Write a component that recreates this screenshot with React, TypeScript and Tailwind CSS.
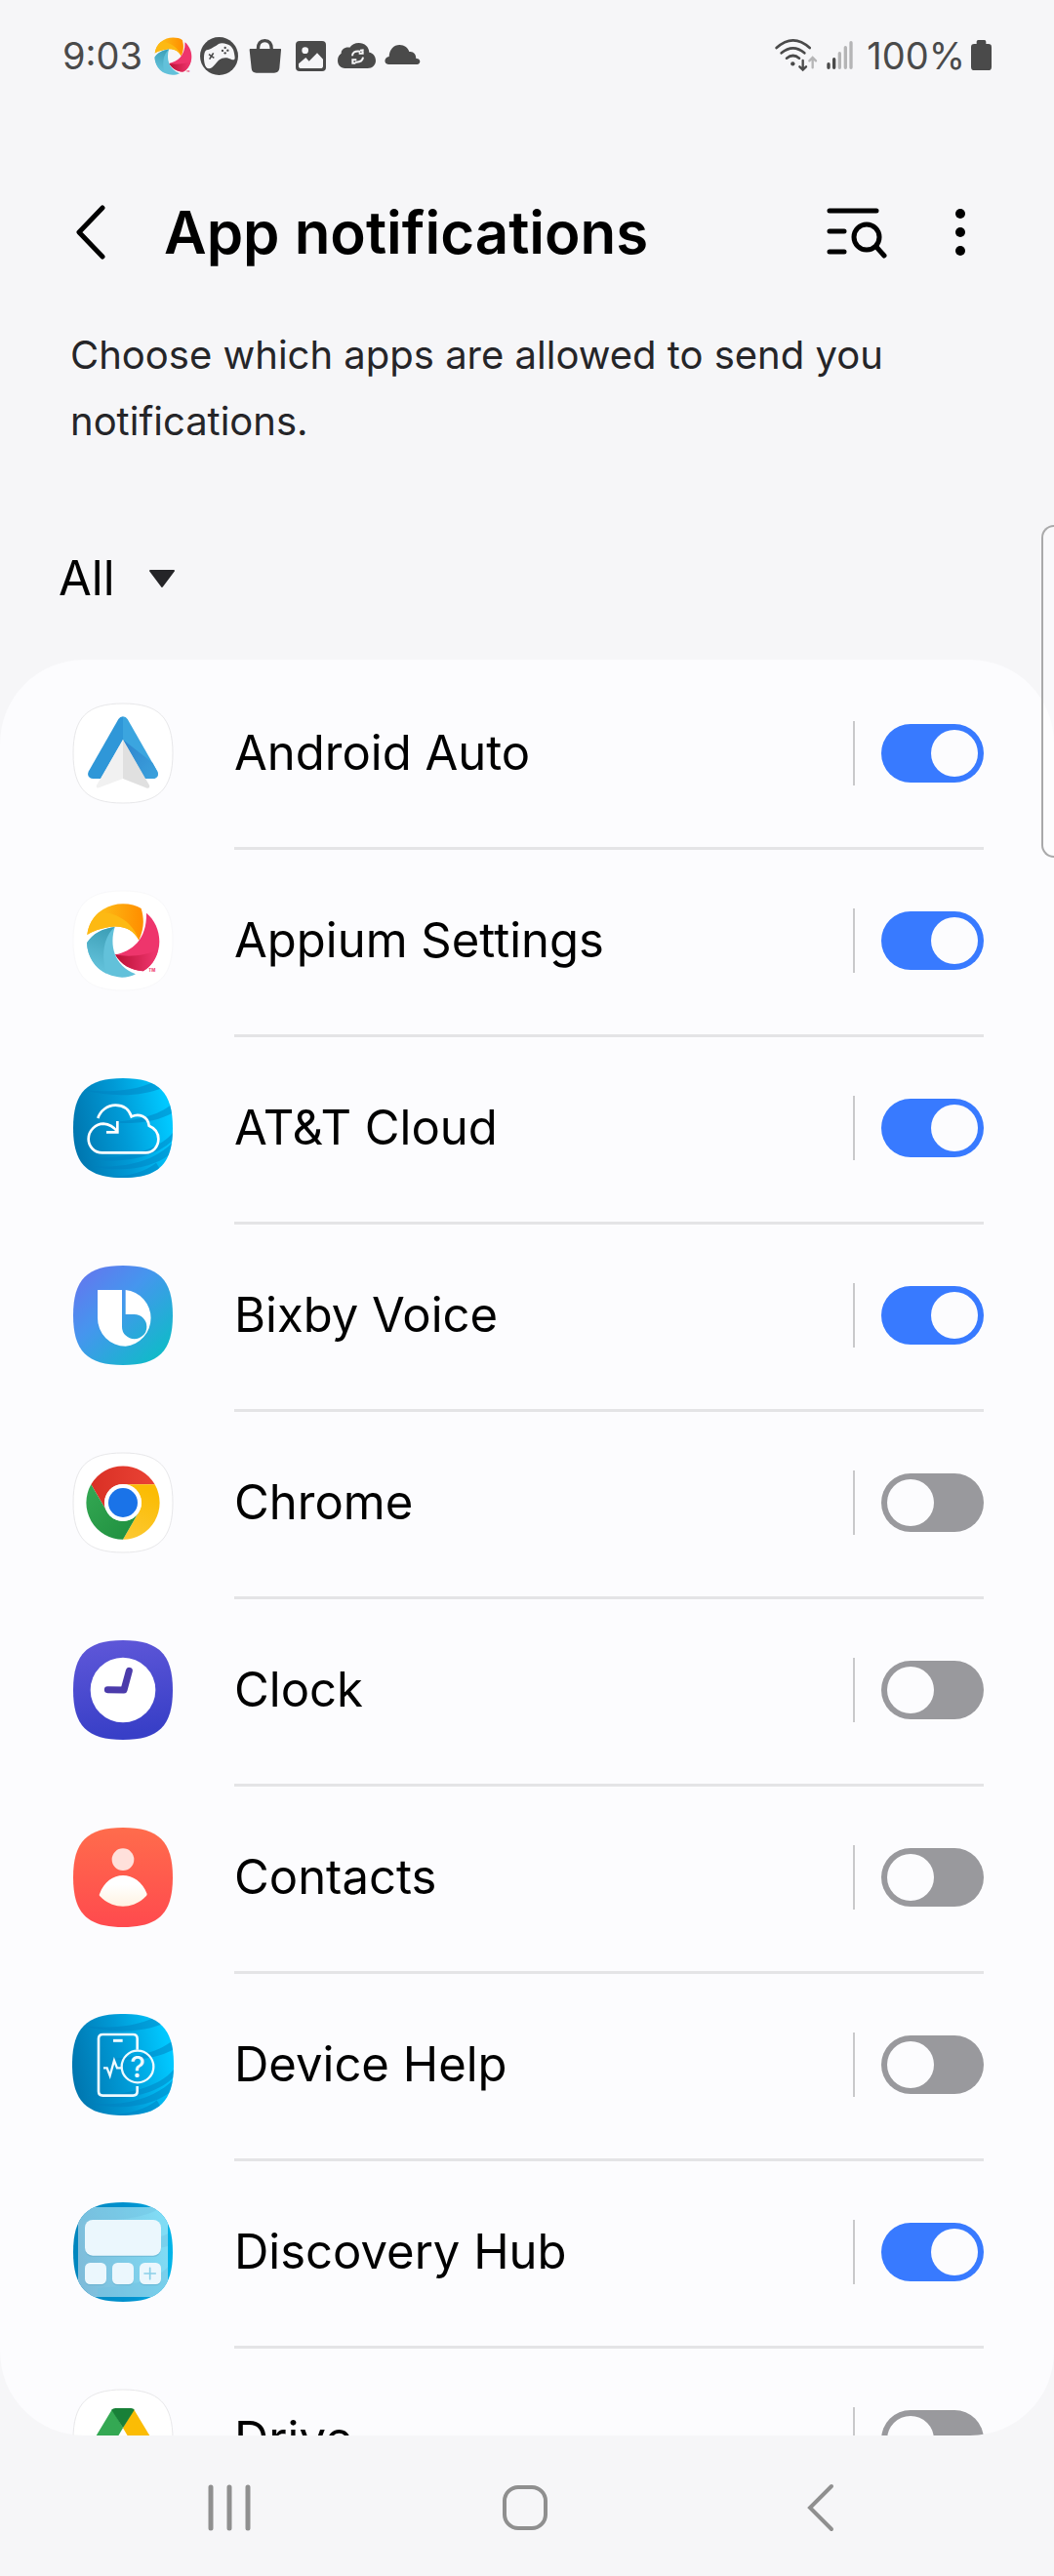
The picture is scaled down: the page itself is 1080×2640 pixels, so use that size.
import { useState, type ReactNode } from "react";

type App = { name: string; icon: ReactNode; on: boolean };

/* ---------- App icons ---------- */

const SQUIRCLE =
  "M0 -153 C110 -153 153 -110 153 0 C153 110 110 153 0 153 C-110 153 -153 110 -153 0 C-153 -110 -110 -153 0 -153Z";

function Tile({ x = 72, y, fill = "#ffffff", stroke = "none", children }: {
  x?: number; y: number; fill?: string; stroke?: string; children: ReactNode;
}) {
  return (
    <svg viewBox={`${x} ${y} 312 312`} className="size-[104px] shrink-0" aria-hidden="true">
      <path d={SQUIRCLE} transform={`translate(${x + 156} ${y + 156})`} fill={fill} stroke={stroke} strokeWidth="3" />
      {children}
    </svg>
  );
}

function AndroidAutoIcon() {
  return (
    <Tile y={90} stroke="#e8e8ea">
      <defs>
        <linearGradient id="aa-shade" x1="0" y1="0" x2="1" y2="1">
          <stop offset="0" stopColor="#2f84cd" />
          <stop offset="1" stopColor="#3ba2dd" />
        </linearGradient>
      </defs>
      <path d="M228 133 Q219 133 214 141 L122 302 Q117 314 126 321 Q130 324 136 324 H160 L228 204Z" fill="#2f97d8" />
      <path d="M228 133 Q237 133 242 141 L334 302 Q339 314 330 321 Q326 324 320 324 H296 L228 204Z" fill="#3ba5df" />
      <path d="M228 204 L319 275 L334 302 Q339 314 330 321 Q326 324 320 324 H296Z" fill="url(#aa-shade)" />
      <path d="M228 204 L147 344 Q144 354 154 352 L228 324Z" fill="#f1f1f1" />
      <path d="M228 204 L309 344 Q312 354 302 353 L228 324Z" fill="#e0e0e0" />
    </Tile>
  );
}

function AppiumMark() {
  return (
    <>
      <defs>
        <linearGradient id="ap-y" x1="0" y1="0" x2="1" y2="0">
          <stop offset="0.3" stopColor="#fdb714" />
          <stop offset="0.95" stopColor="#ff9000" />
        </linearGradient>
        <linearGradient id="ap-p" x1="0" y1="0" x2="1" y2="0">
          <stop offset="0" stopColor="#ba1035" />
          <stop offset="0.9" stopColor="#ec346b" />
        </linearGradient>
        <linearGradient id="ap-t" x1="0.6" y1="0" x2="0.4" y2="1">
          <stop offset="0" stopColor="#3d9fb7" />
          <stop offset="0.9" stopColor="#62c1da" />
        </linearGradient>
      </defs>
      <path d="M118 804 C124 745 175 709 228 709 C250 709 270 714 284 723 C294 758 293 785 277 821 C258 785 225 772 175 782 C150 787 130 795 118 804Z" fill="url(#ap-y)" />
      <path d="M118 804 C122 775 135 752 154 735 C205 732 260 765 277 821 C258 785 225 772 175 782 C150 787 130 795 118 804Z" fill="#fdb913" />
      <path d="M300 737 C325 757 340 790 340 825 C340 860 322 898 290 916 C255 915 220 895 204 865 C255 855 302 820 300 737Z" fill="#ee356c" />
      <path d="M204 865 C245 874 300 868 336 850 C330 880 312 903 290 916 C255 915 220 895 204 865Z" fill="url(#ap-p)" />
      <path d="M203 780 C186 835 200 900 267 925 C255 932 240 935 225 935 C165 932 120 890 117 829 C135 800 165 785 203 780Z" fill="#62c1da" />
      <path d="M203 780 C165 785 135 800 117 829 C118 870 142 908 178 924 C160 870 168 810 203 780Z" fill="url(#ap-t)" />
      <text x="307" y="918" fontSize="13" fontWeight="700" fill="#ee356c">TM</text>
    </>
  );
}

function AttBackground({ id, dy = 0 }: { id: string; dy?: number }) {
  return (
    <>
      <defs>
        <linearGradient id={`${id}-bg`} x1="0" y1="0.6" x2="1" y2="0.4">
          <stop offset="0" stopColor="#0075ae" />
          <stop offset="0.5" stopColor="#009ad6" />
          <stop offset="0.95" stopColor="#00c8ff" />
        </linearGradient>
        <clipPath id={`${id}-clip`}>
          <path d={SQUIRCLE} transform={`translate(228 ${228 + dy})`} />
        </clipPath>
      </defs>
      <g clipPath={`url(#${id}-clip)`}>
        <g transform={`translate(0 ${dy})`}>
          <rect x="72" y="72" width="312" height="312" fill={`url(#${id}-bg)`} />
          <g fill="#0080c0" fillOpacity="0.5">
            <path d="M110 112 C190 120 270 112 322 86 L350 104 C290 130 200 135 110 112Z" />
            <path d="M190 210 C270 206 340 188 376 156 L384 180 C340 206 270 220 190 210Z" />
            <path d="M110 320 C220 325 340 300 384 238 V262 C340 310 240 345 110 320Z" />
            <path d="M130 345 C240 355 335 325 384 268 V300 C340 340 250 372 130 345Z" />
            <path d="M180 378 C250 378 300 360 330 335 L360 384 H180Z" />
          </g>
        </g>
      </g>
    </>
  );
}

function AttCloudIcon() {
  return (
    <Tile y={72}>
      <AttBackground id="att" />
      <g fill="none" stroke="#ffffff" strokeWidth="8">
        <path d="M151 198 C158 175 180 158 205 158 C230 158 247 172 254 193 C277 182 305 192 308 221 C325 228 337 243 337 262 C337 286 320 304 298 304 H164 C140 304 122 285 122 262 C122 235 145 215 168 215 C188 216 201 226 211 240" />
        <path d="M211 207 V241 H177" />
      </g>
    </Tile>
  );
}

function BixbyIcon() {
  return (
    <Tile y={648} fill="url(#bx)">
      <defs>
        <linearGradient id="bx" x1="0.1" y1="0.1" x2="0.85" y2="0.9">
          <stop offset="0" stopColor="#607aee" />
          <stop offset="0.4" stopColor="#4596ee" />
          <stop offset="1" stopColor="#12b9ca" />
        </linearGradient>
      </defs>
      <path d="M150 726 H225 V839 A38 38 0 1 0 263 801 H236 V726 A87 87 0 0 1 236 899 A86 86 0 0 1 150 812Z" fill="#ffffff" />
    </Tile>
  );
}

function ChromeIcon() {
  return (
    <Tile y={54} stroke="#e8e8ea">
      <defs>
        <linearGradient id="ch-r" x1="0" y1="0" x2="1" y2="0">
          <stop offset="0" stopColor="#d93025" />
          <stop offset="1" stopColor="#ea4335" />
        </linearGradient>
        <linearGradient id="ch-y" x1="0" y1="1" x2="0.3" y2="0">
          <stop offset="0" stopColor="#fcc934" />
          <stop offset="1" stopColor="#fbbc04" />
        </linearGradient>
        <linearGradient id="ch-g" x1="1" y1="1" x2="0" y2="0">
          <stop offset="0" stopColor="#1e8e3e" />
          <stop offset="1" stopColor="#34a853" />
        </linearGradient>
      </defs>
      <path d="M130 154 A113 113 0 0 1 326 154 H228 A56 56 0 0 0 179 238Z" fill="url(#ch-r)" />
      <path d="M326 154 A113 113 0 0 1 228 323 L277 238 A56 56 0 0 0 228 154Z" fill="url(#ch-y)" />
      <path d="M228 323 A113 113 0 0 1 130 154 L179 238 A56 56 0 0 0 277 238Z" fill="url(#ch-g)" />
      <circle cx="228" cy="210" r="57" fill="#ffffff" />
      <circle cx="228" cy="210" r="45" fill="#1a73e8" />
    </Tile>
  );
}

function ClockIcon() {
  return (
    <Tile y={630} fill="url(#ck)">
      <defs>
        <linearGradient id="ck" x1="0" y1="0" x2="0.15" y2="1">
          <stop offset="0" stopColor="#6058d9" />
          <stop offset="1" stopColor="#383fc7" />
        </linearGradient>
      </defs>
      <circle cx="228" cy="786" r="100" fill="#ffffff" />
      <path d="M181 785 L231 786 L247 727" fill="none" stroke="#4b3bab" strokeWidth="21" strokeLinecap="round" strokeLinejoin="round" />
    </Tile>
  );
}

function ContactsIcon() {
  return (
    <Tile y={66} fill="url(#ct)">
      <defs>
        <linearGradient id="ct" x1="0" y1="0" x2="0" y2="1">
          <stop offset="0" stopColor="#ff6c4c" />
          <stop offset="1" stopColor="#ff4a4e" />
        </linearGradient>
        <linearGradient id="ct-b" x1="0" y1="0" x2="0" y2="1">
          <stop offset="0.3" stopColor="#ffffff" />
          <stop offset="1" stopColor="#fff3e2" />
        </linearGradient>
      </defs>
      <circle cx="228" cy="167" r="34" fill="#ffe0db" />
      <path d="M156 273 C170 235 198 216 228 216 C258 216 288 235 302 273 Q302 277 299 280 C280 300 255 311 228 311 C201 311 176 300 157 280 Q154 277 156 273Z" fill="url(#ct-b)" />
    </Tile>
  );
}

function DeviceHelpIcon() {
  return (
    <Tile y={642}>
      <g transform="translate(228 798) scale(1.02) translate(-228 -798)">
        <AttBackground id="dh" dy={570} />
      </g>
      <g fill="none" stroke="#eefaff" strokeWidth="8">
        <path d="M272 752 V718 Q272 705 259 705 H166 Q153 705 153 718 V880 Q153 893 166 893 H259 Q272 893 272 880 V864" />
        <path d="M198 724 H227" strokeWidth="9" />
        <circle cx="273" cy="804" r="49" strokeWidth="7" />
        <path d="M168 808 H179 L188 832 L201 785 L210 808 H224" strokeWidth="7" />
      </g>
      <text x="273" y="837" textAnchor="middle" fontSize="88" fontWeight="500" fill="#eefaff">?</text>
    </Tile>
  );
}

function DiscoveryHubIcon() {
  return (
    <Tile x={222} y={78}>
      <defs>
        <linearGradient id="ds-bg" x1="0" y1="0" x2="1" y2="0">
          <stop offset="0" stopColor="#0085bd" />
          <stop offset="0.6" stopColor="#0093d0" />
          <stop offset="1" stopColor="#00b6ea" />
        </linearGradient>
        <linearGradient id="ds-in" x1="0" y1="0.6" x2="1" y2="0.4">
          <stop offset="0" stopColor="#7ebcda" />
          <stop offset="1" stopColor="#80dcf5" />
        </linearGradient>
        <clipPath id="ds-clip">
          <path d={SQUIRCLE} transform="translate(378 234)" />
        </clipPath>
      </defs>
      <g clipPath="url(#ds-clip)">
        <rect x="222" y="78" width="312" height="312" fill="url(#ds-bg)" />
        <rect x="240" y="96" width="276" height="276" fill="url(#ds-in)" />
        <g fill="#6fc0e2" fillOpacity="0.4">
          <path d="M240 96 H500 C460 118 420 130 340 136 H240Z" />
          <path d="M400 205 C450 200 490 190 516 178 V216 C480 226 440 228 400 222Z" />
          <path d="M300 345 C400 340 480 320 516 280 V372 H300Z" />
        </g>
      </g>
      <g fill="#5fa9c8" fillOpacity="0.5">
        <rect x="261" y="139" width="234" height="110" rx="24" />
        <rect x="261" y="271" width="66" height="66" rx="16" />
        <rect x="345" y="271" width="66" height="66" rx="16" />
        <rect x="429" y="271" width="66" height="66" rx="16" />
      </g>
      <g fill="#ebf7fd">
        <rect x="261" y="135" width="234" height="110" rx="24" />
        <rect x="261" y="267" width="66" height="66" rx="16" />
        <rect x="345" y="267" width="66" height="66" rx="16" />
        <rect x="429" y="267" width="66" height="66" rx="16" />
      </g>
      <path d="M461 283 V317 M444 300 H478" stroke="#8ad0e8" strokeWidth="5" strokeLinecap="round" />
    </Tile>
  );
}

function DriveIcon() {
  return (
    <Tile x={222} y={654} stroke="#e8e8ea">
      <path d="M345 717 L260 858 L295 915 L378 775Z" fill="#34a853" />
      <path d="M411 717 L496 858 H427 L378 775Z" fill="#fbbc04" />
      <path d="M295 915 L328 858 H496 L461 915Z" fill="#4285f4" />
      <path d="M343 719 Q347 714 355 714 H403 Q410 714 413 719 L378 775Z" fill="#188038" />
    </Tile>
  );
}

const APPS: App[] = [
  { name: "Android Auto", icon: <AndroidAutoIcon />, on: true },
  { name: "Appium Settings", icon: <Tile y={666} stroke="#f8f8fa"><AppiumMark /></Tile>, on: true },
  { name: "AT&T Cloud", icon: <AttCloudIcon />, on: true },
  { name: "Bixby Voice", icon: <BixbyIcon />, on: true },
  { name: "Chrome", icon: <ChromeIcon />, on: false },
  { name: "Clock", icon: <ClockIcon />, on: false },
  { name: "Contacts", icon: <ContactsIcon />, on: false },
  { name: "Device Help", icon: <DeviceHelpIcon />, on: false },
  { name: "Discovery Hub", icon: <DiscoveryHubIcon />, on: true },
  { name: "Drive", icon: <DriveIcon />, on: false },
];

/* ---------- Status bar ---------- */

function StatusBar() {
  return (
    <div className="flex h-[114px] shrink-0 items-center justify-between px-16 text-[38px] leading-none text-[#4a4a4a]">
      <div className="flex items-center gap-2">
        <span className="mr-1">9:03</span>
        <svg viewBox="114 706 230 230" className="size-[39px]" aria-hidden="true"><AppiumMark /></svg>
        <svg viewBox="498 54 117 117" className="size-[39px]" aria-hidden="true">
          <circle cx="556.5" cy="112.5" r="58.5" fill="#4a4a4a" />
          <path d="M518 94 C530 92 545 82 555 75 C562 71 572 72 580 76 C594 80 601 90 603 104 C606 118 606 124 600 124 C592 124 588 118 576 118 C560 118 553 128 544 138 C534 151 524 154 517 147 C508 136 507 98 518 94Z" fill="#f6f6f8" />
          <path d="M525 107 L541 118 M539 103 L527 122" stroke="#4a4a4a" strokeWidth="5" />
          <g fill="#4a4a4a">
            <circle cx="575" cy="87" r="3.5" /><circle cx="567" cy="96" r="3.5" />
            <circle cx="583" cy="95" r="3.5" /><circle cx="575" cy="103" r="3.5" />
          </g>
        </svg>
        <svg viewBox="639 54 117 117" className="size-[39px]" aria-hidden="true">
          <path d="M652 90 H745 Q748 90 747 94 L742 150 Q740 164 726 164 H671 Q657 164 656 150 L650 94 Q650 90 652 90Z" fill="#4a4a4a" />
          <path d="M676 92 C676 73 685 65 697 65 C709 65 718 73 718 92" fill="none" stroke="#4a4a4a" strokeWidth="10" />
        </svg>
        <svg viewBox="780 54 117 117" className="size-[39px]" aria-hidden="true">
          <rect x="792" y="66" width="93" height="93" rx="12" fill="#4a4a4a" />
          <circle cx="821" cy="95" r="10" fill="#f6f6f8" />
          <path d="M801 136 L823 117 L833 128 L858 103 L876 122 V143 Q876 150 868 150 H809 Q801 150 801 143Z" fill="#f6f6f8" />
        </svg>
        <svg viewBox="921 54 117 117" className="size-[39px]" aria-hidden="true">
          <path d="M944 150 C929 150 921 139 921 126 C921 115 926 108 932 104 C931 92 945 83 958 86 C964 77 974 72 986 72 C1004 72 1017 84 1018 101 C1030 103 1038 113 1038 126 C1038 140 1028 150 1013 150Z" fill="#4a4a4a" />
          <g fill="none" stroke="#f6f6f8" strokeWidth="6">
            <path d="M966 112 C966 101 974 96 990 98 M990 95 L1001 94 M998 92 V107 M1001 104 H986" />
            <path d="M999 116 C998 127 990 132 975 131 M964 134 H976 M967 136 V121 M964 124 H979" />
          </g>
        </svg>
        <svg viewBox="1062 54 117 117" className="size-[39px]" aria-hidden="true">
          <path d="M1077 138 C1062 137 1063 116 1079 114 C1080 92 1094 78 1111 78 C1127 78 1137 87 1141 99 C1154 97 1162 107 1162 120 C1178 119 1177 138 1165 138Z" fill="#4a4a4a" />
        </svg>
      </div>
      <div className="flex items-center">
        <svg viewBox="92 54 132 117" className="mr-2 h-[39px] w-11" fill="none" strokeWidth="8" strokeLinecap="round" aria-hidden="true">
          <g stroke="#4a4a4a">
            <path d="M97 87 Q148 41 199 87" /><path d="M112 103 Q148 73 183 103" /><path d="M128 119 Q148 103 167 119" />
            <path d="M178 126 V154 M168 145 L178 155 L188 145" strokeWidth="7" />
          </g>
          <circle cx="147" cy="136" r="6.5" fill="#4a4a4a" />
          <path d="M208 148 V118 M198 127 L208 117 L218 127" stroke="#b5b5b6" strokeWidth="7" />
        </svg>
        <svg viewBox="249 54 84 117" className="mr-[14px] h-[39px] w-7" strokeWidth="10" strokeLinecap="round" aria-hidden="true">
          <path d="M258 137 V148 M275 122 V148" stroke="#4a4a4a" />
          <path d="M292 104 V148 M310 86 V148 M327 71 V148" stroke="#b5b5b6" />
        </svg>
        <span>100%</span>
        <svg viewBox="705 54 63 117" className="ml-[6px] h-[39px] w-[21px]" fill="#4a4a4a" aria-hidden="true">
          <rect x="722" y="63" width="29" height="20" rx="5" />
          <rect x="705" y="75" width="63" height="81" rx="10" />
        </svg>
      </div>
    </div>
  );
}

/* ---------- Header ---------- */

function Header() {
  return (
    <header className="mt-16 flex h-30 shrink-0 items-center pr-16 pl-[72px]">
      <button type="button" aria-label="Back" className="mr-[52px] flex h-16 w-11 items-center justify-center">
        <svg viewBox="0 0 44 64" className="h-16 w-11" fill="none" stroke="#000000" strokeWidth="5" strokeLinecap="round" strokeLinejoin="round">
          <path d="M33 7 L9 32 L33 57" />
        </svg>
      </button>
      <h1 className="min-w-0 flex-1 text-[60px] leading-[72px] font-semibold text-black">App notifications</h1>
      <button type="button" aria-label="Search in list" className="mr-[43px]">
        <svg viewBox="0 0 64 56" className="h-14 w-16" fill="none" stroke="#000000" strokeWidth="5" strokeLinecap="round">
          <path d="M5 6 H53 M5 27 H20 M5 48 H20" />
          <circle cx="43" cy="33" r="13" />
          <path d="M53 43 L61 52" />
        </svg>
      </button>
      <button type="button" aria-label="More options">
        <svg viewBox="0 0 64 56" className="h-14 w-16" fill="#000000">
          <circle cx="32" cy="9" r="5" /><circle cx="32" cy="28" r="5" /><circle cx="32" cy="47" r="5" />
        </svg>
      </button>
    </header>
  );
}

/* ---------- List ---------- */

function AppRow({ app, first }: { app: App; first: boolean }) {
  const [on, setOn] = useState(app.on);
  const id = "app-" + app.name.toLowerCase().replace(/[^a-z]+/g, "-");
  return (
    <li className="flex h-48 items-center gap-[62px] pr-[72px] pl-[74px]">
      {app.icon}
      <div className={`flex h-full min-w-0 flex-1 items-center border-t-3 pb-[3px] ${first ? "border-transparent" : "border-[#e4e4e6]"}`}>
        <label htmlFor={id} className="min-w-0 flex-1 truncate text-[49px] leading-[68px] text-black">{app.name}</label>
        <span className="mr-[27px] h-[66px] w-0.5 shrink-0 bg-[#c9c9cb]" />
        <input
          id={id}
          type="checkbox"
          role="switch"
          checked={on}
          onChange={(e) => setOn(e.target.checked)}
          className="flex h-[60px] w-[105px] shrink-0 cursor-pointer appearance-none items-center justify-start rounded-full bg-[#99999d] px-[6px] before:size-12 before:rounded-full before:bg-[#fcfcfe] before:content-[''] checked:justify-end checked:bg-[#387aff]"
        />
      </div>
    </li>
  );
}

/* ---------- Navigation bar ---------- */

function NavBar() {
  return (
    <nav className="grid h-36 shrink-0 grid-cols-3 items-center justify-items-center pt-1 pr-[88px] pl-[83px]">
      <button type="button" aria-label="Recent apps">
        <svg viewBox="0 0 56 56" className="size-14" stroke="#8f8f8f" strokeWidth="5" strokeLinecap="round">
          <path d="M9 7 V49 M28 7 V49 M47 7 V49" />
        </svg>
      </button>
      <button type="button" aria-label="Home">
        <svg viewBox="0 0 56 56" className="size-14" fill="none" stroke="#8f8f8f" strokeWidth="4">
          <rect x="7" y="7" width="42" height="42" rx="14" />
        </svg>
      </button>
      <button type="button" aria-label="Back">
        <svg viewBox="0 0 56 56" className="size-14" fill="none" stroke="#8f8f8f" strokeWidth="4" strokeLinecap="round">
          <path d="M39 6 L17 28 L39 50" />
        </svg>
      </button>
    </nav>
  );
}

export default function App() {
  const [filter, setFilter] = useState("All");
  return (
    <div className="relative flex h-screen flex-col overflow-hidden bg-[#f6f6f8] font-['Inter',sans-serif]">
      <StatusBar />
      <Header />
      <p className="mx-[72px] mt-8 text-[40px] leading-[68px] text-[#252528]">
        Choose which apps are allowed to send you notifications.
      </p>
      <div className="relative mt-[79px] mb-[35px] ml-15 w-[132px]">
        <select
          aria-label="Filter apps"
          value={filter}
          onChange={(e) => setFilter(e.target.value)}
          className="block h-24 w-full appearance-none bg-transparent text-[49px] text-black"
        >
          <option>All</option>
          <option>Blocked</option>
        </select>
        <svg viewBox="0 0 28 20" className="pointer-events-none absolute top-1/2 right-3 h-5 w-7 -translate-y-1/2" fill="#252528" stroke="#252528" strokeWidth="2" strokeLinejoin="round" aria-hidden="true">
          <path d="M2 2 H26 L14 18Z" />
        </svg>
      </div>
      <main className="min-h-0 flex-1 overflow-y-auto rounded-[86px] bg-[#fcfcfe] [scrollbar-width:none]">
        <ul>
          {APPS.map((app, i) => <AppRow key={app.name} app={app} first={i === 0} />)}
        </ul>
      </main>
      <NavBar />
      <div className="absolute top-[538px] right-0 h-[341px] w-[13px] rounded-l-[14px] border-2 border-r-0 border-[#a9a9aa] bg-white/40" />
    </div>
  );
}
